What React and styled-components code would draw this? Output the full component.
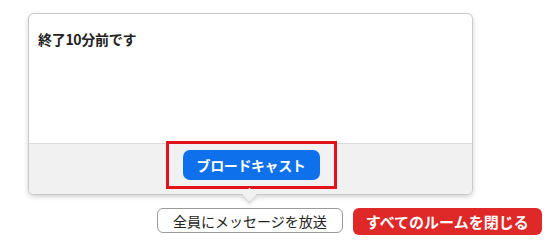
import React from "react";
import styled, { createGlobalStyle } from "styled-components";

const Global = createGlobalStyle`
  html, body { margin: 0; padding: 0; background: #ffffff; }
  body { font-family: "Noto Sans CJK JP", "Noto Sans", sans-serif; }
`;

const Page = styled.div`
  width: 553px;
  height: 244px;
  padding: 13px 0 0 28px;
  box-sizing: border-box;
  display: flex;
  flex-direction: column;
`;

const Popover = styled.div`
  position: relative;
  width: 445px;
  height: 182px;
  box-sizing: border-box;
  border: 1px solid #c9c9c9;
  border-radius: 6px;
  background: #ffffff;
  box-shadow: 0 2px 5px rgba(0, 0, 0, 0.18);
  display: flex;
  flex-direction: column;
`;

const Message = styled.div`
  flex: 1;
  padding: 16px 9px 0;
  font-size: 14px;
  font-weight: 700;
  color: #232323;
  line-height: 18px;
  letter-spacing: -0.3px;
`;

const Footer = styled.div`
  height: 50px;
  border-top: 1px solid #dcdcdc;
  background: #f1f1f1;
  border-radius: 0 0 5px 5px;
  display: flex;
  justify-content: center;
  align-items: flex-start;
`;

const Highlight = styled.div`
  margin-top: -3px;
  margin-left: 1px;
  width: 171px;
  height: 48px;
  box-sizing: border-box;
  border: 3px solid #e3131c;
  display: flex;
  align-items: center;
  justify-content: center;
`;

const BroadcastButton = styled.button`
  width: 137px;
  height: 30px;
  border: none;
  border-radius: 7px;
  background: #0e71eb;
  color: #ffffff;
  font-family: inherit;
  font-size: 14px;
  font-weight: 700;
  letter-spacing: -0.4px;
  padding: 0;
`;

const Arrow = styled.div`
  position: absolute;
  left: 215px;
  bottom: -7px;
  width: 10px;
  height: 10px;
  background: #f1f1f1;
  border-right: 1px solid #d6d6d6;
  border-bottom: 1px solid #d6d6d6;
  transform: rotate(45deg);
  box-shadow: 2px 2px 3px rgba(0, 0, 0, 0.08);
`;

const ButtonRow = styled.div`
  margin: 13px 0 0 129px;
  display: flex;
  gap: 10px;
`;

const ActionButton = styled.button`
  height: ${(p) => (p.$danger ? "27px" : "25px")};
  box-sizing: border-box;
  padding: 0 ${(p) => (p.$danger ? "13px" : "15px")};
  border-radius: 6px;
  border: ${(p) => (p.$danger ? "none" : "1px solid #9a9a9a")};
  background: ${(p) => (p.$danger ? "#df2828" : "#ffffff")};
  color: ${(p) => (p.$danger ? "#ffffff" : "#232323")};
  font-family: inherit;
  font-size: ${(p) => (p.$danger ? "15px" : "14px")};
  font-weight: ${(p) => (p.$danger ? 700 : 400)};
  line-height: 1;
  white-space: nowrap;
`;

export default function App() {
  return (
    <>
      <Global />
      <Page>
        <Popover>
          <Message>終了10分前です</Message>
          <Footer>
            <Highlight>
              <BroadcastButton>ブロードキャスト</BroadcastButton>
            </Highlight>
          </Footer>
          <Arrow />
        </Popover>
        <ButtonRow>
          <ActionButton>全員にメッセージを放送</ActionButton>
          <ActionButton $danger>すべてのルームを閉じる</ActionButton>
        </ButtonRow>
      </Page>
    </>
  );
}
